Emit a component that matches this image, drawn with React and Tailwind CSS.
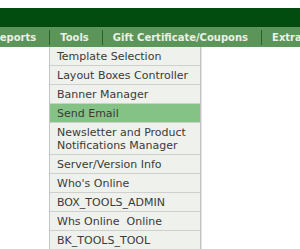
import React from 'react';

const items = [
  'Template Selection',
  'Layout Boxes Controller',
  'Banner Manager',
  'Send Email',
  'Newsletter and Product Notifications Manager',
  'Server/Version Info',
  "Who's Online",
  'BOX_TOOLS_ADMIN',
  'Whs Online\u00a0 Online',
  'BK_TOOLS_TOOL',
];

function Sep() {
  return <span className="ml-[13px] mr-[10px] h-[15px] w-px shrink-0 bg-[#2c5f2a]" />;
}

export default function App() {
  return (
    <div className="relative h-[249px] w-[300px] overflow-hidden bg-white" style={{ fontFamily: '"DejaVu Sans", Verdana, sans-serif' }}>
      <div className="h-[8px]" />
      <div className="h-[19px] bg-[#024c0f]" />

      {/* main menu bar */}
      <div className="flex h-[20px] items-center whitespace-nowrap bg-[#5c955a] text-[10px] font-bold text-[#e9f1e4]">
        <span className="-ml-[8px]">Reports</span>
        <Sep />
        <span>Tools</span>
        <Sep />
        <span>Gift Certificate/Coupons</span>
        <Sep />
        <span>Extras</span>
      </div>

      {/* Tools dropdown */}
      <ul className="absolute left-[49px] top-[47px] w-[152px] border-x border-[#c3c3c3] bg-[#eff1ec] text-[11px] leading-[13px] text-[#3a3a3a] shadow-[1px_0_0_#e2e2e2]">
        {items.map((label) => (
          <li
            key={label}
            className={
              'border-b border-[#cfcfcf] pt-[3px] pb-[2px] pl-[7px] pr-[4px] ' +
              (label === 'Send Email' ? 'bg-[#84c285]' : '')
            }
          >
            {label}
          </li>
        ))}
      </ul>
    </div>
  );
}
